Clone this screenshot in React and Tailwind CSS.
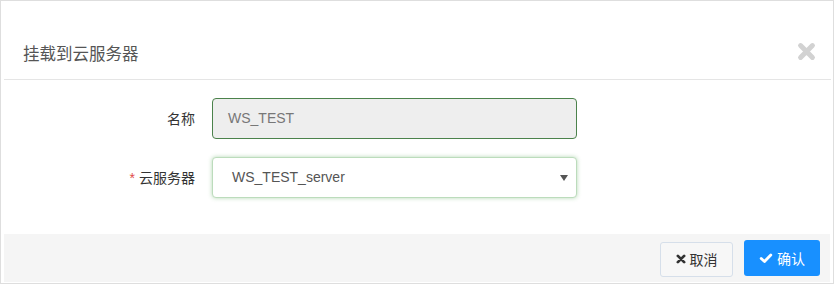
import React from 'react'

const CJK = { fontFamily: '"Microsoft YaHei", "Noto Sans CJK SC", "Liberation Sans", sans-serif' }
const LATIN = { fontFamily: '"Liberation Sans", Arial, "Noto Sans CJK SC", sans-serif' }

function TimesIcon({ className, width = 4 }) {
  return (
    <svg viewBox="0 0 16 16" className={className} fill="none" stroke="currentColor" strokeWidth={width} strokeLinecap="round">
      <path d="M3 3 L13 13 M13 3 L3 13" />
    </svg>
  )
}

function CheckIcon({ className }) {
  return (
    <svg viewBox="0 0 16 16" className={className} fill="none" stroke="currentColor" strokeWidth="3.2" strokeLinecap="round" strokeLinejoin="round">
      <path d="M2.5 8.5 L6.3 12 L13.5 4.5" />
    </svg>
  )
}

export default function App() {
  return (
    <div className="w-[834px] h-[284px] bg-white border border-[#dedede] pl-[3px] pr-[2px] pb-[1px] pt-0 flex flex-col">
      {/* Header */}
      <div className="h-[79px] shrink-0 border-b border-[#e5e5e5] flex items-center pt-[26px] pl-[19px] pr-[15px] justify-between">
        <h3 className="text-[16.5px] leading-[22px] text-[#555]" style={CJK}>挂载到云服务器</h3>
        <button className="text-[#d2d2d2] -mt-[4px]">
          <TimesIcon className="w-[19px] h-[19px]" width={4.2} />
        </button>
      </div>

      {/* Form */}
      <div className="flex-1 flex flex-col pt-[18px] gap-[18px]">
        <div className="flex items-center">
          <label className="w-[191px] text-right text-[14px] text-[#333]" style={CJK}>名称</label>
          <div className="ml-[17px] w-[365px] h-[41px] rounded-[4px] border border-[#4b824b] bg-[#eeeeee] flex items-center pl-[15px] text-[14px] text-[#777]" style={LATIN}>
            WS_TEST
          </div>
        </div>
        <div className="flex items-center">
          <label className="w-[191px] text-right text-[14px] text-[#333]" style={CJK}>
            <span className="text-[#e04b4b] mr-[4px]" style={LATIN}>*</span>云服务器
          </label>
          <div className="ml-[17px] w-[365px] h-[41px] rounded-[4px] border border-[#bcdcbc] shadow-[0_0_4px_rgba(90,170,90,0.45)] bg-white flex items-center justify-between pl-[19px] pr-[8px] text-[14px] text-[#555]" style={LATIN}>
            <span>WS_TEST_server</span>
            <svg viewBox="0 0 8 6" className="w-[8px] h-[6px] text-[#555]">
              <path d="M0 0 L8 0 L4 6 Z" fill="currentColor" />
            </svg>
          </div>
        </div>
      </div>

      {/* Footer */}
      <div className="h-[48px] shrink-0 bg-[#f5f5f5] flex items-center justify-end pr-[10px] gap-[11px] mr-[1px]">
        <button className="w-[73px] h-[35px] mt-[2px] rounded-[3px] border border-[#d6dfea] bg-[#f7f7f7] text-[#333] text-[14px] flex items-center justify-center gap-[4px]" style={CJK}>
          <TimesIcon className="w-[10px] h-[10px]" width={4.4} />
          取消
        </button>
        <button className="w-[76px] h-[36px] rounded-[3px] bg-[#1890ff] text-white text-[14px] flex items-center justify-center gap-[4px]" style={CJK}>
          <CheckIcon className="w-[14px] h-[14px]" />
          确认
        </button>
      </div>
    </div>
  )
}
